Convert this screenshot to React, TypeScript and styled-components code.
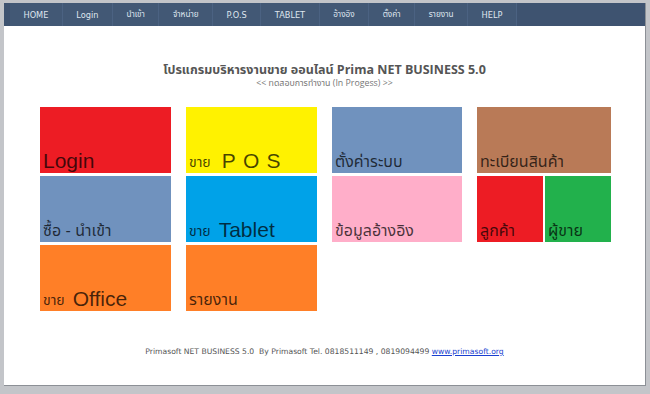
import React from "react";
import styled, { createGlobalStyle } from "styled-components";

const Global = createGlobalStyle`
  html, body { margin: 0; padding: 0; }
  body { background: #c3c5c9; width: 650px; height: 394px; overflow: hidden; }
`;

const Frame = styled.div`
  width: 650px;
  height: 394px;
  box-sizing: border-box;
  padding: 3px 4px 8px 4px;
  background: #c3c5c9;
`;

const Panel = styled.div`
  height: 100%;
  background: #fff;
  border-right: 1px solid #8c9096;
  border-bottom: 1px solid #8c9096;
  box-sizing: border-box;
  display: flex;
  flex-direction: column;
`;

const Nav = styled.nav`
  height: 23px;
  background: #3e5370;
  display: flex;
  align-items: stretch;
  padding-left: 6px;
  font-family: "DejaVu Sans", "Noto Sans Thai", "Noto Sans", sans-serif;
`;

const NavItem = styled.a`
  display: flex;
  align-items: center;
  padding: 0 13.5px;
  color: #dfe5ee;
  font-size: 8.2px;
  border-right: 1px solid #4b6282;
  text-decoration: none;
  background: #425875;
`;

const Header = styled.header`
  display: flex;
  flex-direction: column;
  align-items: center;
  padding-top: 36px;
  font-family: "Open Sans", "Noto Sans Thai", sans-serif;
`;

const Title = styled.h1`
  margin: 0;
  font-size: 12.5px;
  font-weight: 700;
  color: #555;
  line-height: 16px;
`;

const Subtitle = styled.div`
  font-size: 8.8px;
  color: #777;
  line-height: 10px;
`;

const Grid = styled.div`
  display: grid;
  grid-template-columns: 131px 131px 130px 134px;
  grid-template-rows: 66px 66px 66px;
  column-gap: 15px;
  row-gap: 3px;
  margin: 19px 0 0 36px;
`;

const Tile = styled.div<{ $bg: string }>`
  background: ${(p) => p.$bg};
  display: flex;
  align-items: flex-end;
  padding: 0 0 0 3px;
  box-sizing: border-box;
  font-family: "Liberation Sans", "Noto Sans Thai", sans-serif;
  color: rgba(0, 0, 0, 0.72);
  white-space: nowrap;
  overflow: hidden;
`;

const Split = styled.div`
  display: grid;
  grid-template-columns: 1fr 1fr;
  column-gap: 2px;
`;

const Big = styled.span<{ $ls?: number }>`
  font-size: 21px;
  letter-spacing: ${(p) => p.$ls ?? 0}px;
  line-height: 24px;
`;

const Small = styled.span<{ $gap?: number }>`
  font-size: 14px;
  line-height: 22px;
  margin-right: ${(p) => p.$gap ?? 8}px;
`;

const Thai = styled.span`
  font-size: 16px;
  line-height: 22px;
`;

const Footer = styled.footer`
  margin-top: 36px;
  text-align: center;
  font-family: "DejaVu Sans", "Noto Sans", sans-serif;
  font-size: 7.65px;
  color: #555;
  a { color: #1a3fd0; }
`;

const navItems = [
  "HOME",
  "Login",
  "นำเข้า",
  "จำหน่าย",
  "P.O.S",
  "TABLET",
  "อ้างอิง",
  "ตั้งค่า",
  "รายงาน",
  "HELP",
];

export default function App() {
  return (
    <>
      <Global />
      <Frame>
        <Panel>
          <Nav>
            {navItems.map((t) => (
              <NavItem key={t}>{t}</NavItem>
            ))}
          </Nav>
          <Header>
            <Title>โปรแกรมบริหารงานขาย ออนไลน์ Prima NET BUSINESS 5.0</Title>
            <Subtitle>&lt;&lt; ทดสอบการทำงาน (In Progess) &gt;&gt;</Subtitle>
          </Header>
          <Grid>
            <Tile $bg="#ed1c24"><Big>Login</Big></Tile>
            <Tile $bg="#fff200"><Small $gap={11}>ขาย</Small><Big $ls={7.2}>POS</Big></Tile>
            <Tile $bg="#7092be"><Thai>ตั้งค่าระบบ</Thai></Tile>
            <Tile $bg="#b97a57"><Thai>ทะเบียนสินค้า</Thai></Tile>
            <Tile $bg="#7092be"><Thai>ซื้อ - นำเข้า</Thai></Tile>
            <Tile $bg="#00a2e8"><Small>ขาย</Small><Big>Tablet</Big></Tile>
            <Tile $bg="#ffaec9"><Thai>ข้อมูลอ้างอิง</Thai></Tile>
            <Split>
              <Tile $bg="#ed1c24"><Thai>ลูกค้า</Thai></Tile>
              <Tile $bg="#22b14c"><Thai>ผู้ขาย</Thai></Tile>
            </Split>
            <Tile $bg="#ff7f27"><Small>ขาย</Small><Big>Office</Big></Tile>
            <Tile $bg="#ff7f27"><Thai>รายงาน</Thai></Tile>
          </Grid>
          <Footer>
            Primasoft NET BUSINESS 5.0&nbsp; By Primasoft Tel. 0818511149 , 0819094499{" "}
            <a href="#">www.primasoft.org</a>
          </Footer>
        </Panel>
      </Frame>
    </>
  );
}
